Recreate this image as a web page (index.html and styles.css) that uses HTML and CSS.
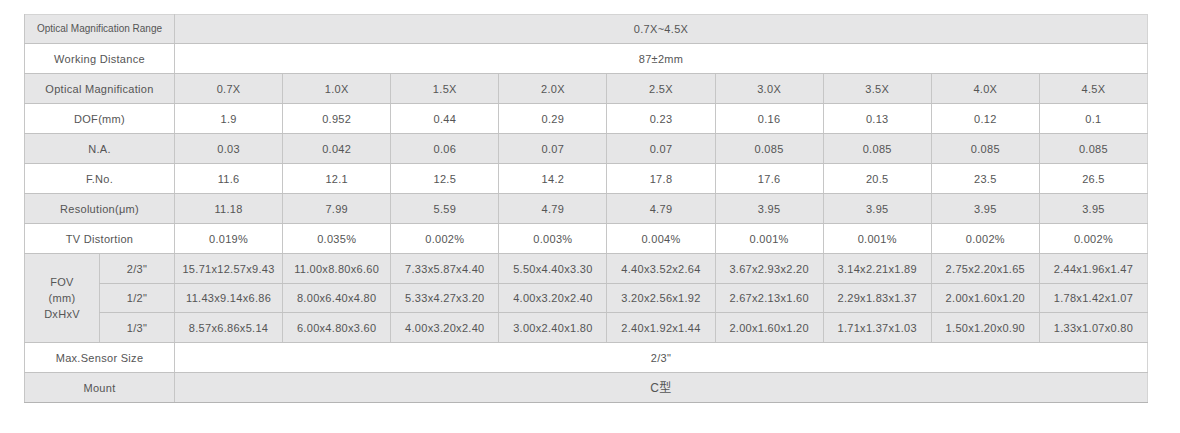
FILE: index.html
```html
<!DOCTYPE html>
<html lang="en">
<head>
<meta charset="utf-8">
<title>Specifications</title>
<link rel="stylesheet" href="styles.css">
</head>
<body>
<div class="page">
<table class="spec">
  <colgroup>
    <col class="c-lab"><col class="c-lab">
    <col><col><col><col><col><col><col><col><col>
  </colgroup>
  <tbody>
    <tr class="gray short">
      <th colspan="2" class="small">Optical Magnification Range</th>
      <td colspan="9">0.7X~4.5X</td>
    </tr>
    <tr>
      <th colspan="2">Working Distance</th>
      <td colspan="9">87±2mm</td>
    </tr>
    <tr class="gray">
      <th colspan="2">Optical Magnification</th>
      <td>0.7X</td><td>1.0X</td><td>1.5X</td><td>2.0X</td><td>2.5X</td><td>3.0X</td><td>3.5X</td><td>4.0X</td><td>4.5X</td>
    </tr>
    <tr>
      <th colspan="2">DOF(mm)</th>
      <td>1.9</td><td>0.952</td><td>0.44</td><td>0.29</td><td>0.23</td><td>0.16</td><td>0.13</td><td>0.12</td><td>0.1</td>
    </tr>
    <tr class="gray">
      <th colspan="2">N.A.</th>
      <td>0.03</td><td>0.042</td><td>0.06</td><td>0.07</td><td>0.07</td><td>0.085</td><td>0.085</td><td>0.085</td><td>0.085</td>
    </tr>
    <tr>
      <th colspan="2">F.No.</th>
      <td>11.6</td><td>12.1</td><td>12.5</td><td>14.2</td><td>17.8</td><td>17.6</td><td>20.5</td><td>23.5</td><td>26.5</td>
    </tr>
    <tr class="gray">
      <th colspan="2">Resolution(μm)</th>
      <td>11.18</td><td>7.99</td><td>5.59</td><td>4.79</td><td>4.79</td><td>3.95</td><td>3.95</td><td>3.95</td><td>3.95</td>
    </tr>
    <tr>
      <th colspan="2">TV Distortion</th>
      <td>0.019%</td><td>0.035%</td><td>0.002%</td><td>0.003%</td><td>0.004%</td><td>0.001%</td><td>0.001%</td><td>0.002%</td><td>0.002%</td>
    </tr>
    <tr class="gray">
      <th rowspan="3" class="fov">FOV<br>(mm)<br>DxHxV</th>
      <th>2/3"</th>
      <td>15.71x12.57x9.43</td><td>11.00x8.80x6.60</td><td>7.33x5.87x4.40</td><td>5.50x4.40x3.30</td><td>4.40x3.52x2.64</td><td>3.67x2.93x2.20</td><td>3.14x2.21x1.89</td><td>2.75x2.20x1.65</td><td>2.44x1.96x1.47</td>
    </tr>
    <tr class="gray short">
      <th>1/2"</th>
      <td>11.43x9.14x6.86</td><td>8.00x6.40x4.80</td><td>5.33x4.27x3.20</td><td>4.00x3.20x2.40</td><td>3.20x2.56x1.92</td><td>2.67x2.13x1.60</td><td>2.29x1.83x1.37</td><td>2.00x1.60x1.20</td><td>1.78x1.42x1.07</td>
    </tr>
    <tr class="gray">
      <th>1/3"</th>
      <td>8.57x6.86x5.14</td><td>6.00x4.80x3.60</td><td>4.00x3.20x2.40</td><td>3.00x2.40x1.80</td><td>2.40x1.92x1.44</td><td>2.00x1.60x1.20</td><td>1.71x1.37x1.03</td><td>1.50x1.20x0.90</td><td>1.33x1.07x0.80</td>
    </tr>
    <tr>
      <th colspan="2">Max.Sensor Size</th>
      <td colspan="9">2/3"</td>
    </tr>
    <tr class="gray last">
      <th colspan="2">Mount</th>
      <td colspan="9" class="cjk">C型</td>
    </tr>
  </tbody>
</table>
</div>
</body>
</html>
```

FILE: styles.css
```css
html, body {
  margin: 0;
  padding: 0;
  background: #ffffff;
}

.page {
  padding: 14px 0 0 24px;
}

.spec {
  width: 1124px;
  border-collapse: collapse;
  table-layout: fixed;
  font-family: "Liberation Sans", Arial, "Noto Sans CJK SC", sans-serif;
  font-size: 11px;
  color: #555555;
  letter-spacing: 0.3px;
  border-top: 1px solid #d4d4d4;
  border-left: 1px solid #d4d4d4;
  border-right: 1px solid #d4d4d4;
}

.spec col.c-lab {
  width: 75px;
}

.spec th,
.spec td {
  height: 29px;
  padding: 0;
  text-align: center;
  vertical-align: middle;
  font-weight: normal;
  border-bottom: 1px solid #c2c2c2;
  border-left: 1px solid #c6c6c6;
  line-height: 14px;
  white-space: nowrap;
  overflow: hidden;
}

.spec tr.short th,
.spec tr.short td {
  height: 28px;
}

.spec tr.short th.fov {
  height: auto;
}

.spec tr.gray th,
.spec tr.gray td {
  background: #e6e6e7;
}

.spec .small {
  font-size: 10px;
  letter-spacing: 0;
}

.spec .fov {
  line-height: 16px;
}

.spec tr.last th,
.spec tr.last td {
  border-bottom: 1px solid #b4b4b4;
}

.spec .cjk {
  font-family: "Liberation Sans", "Noto Sans CJK SC", sans-serif;
  font-size: 12px;
}
```
